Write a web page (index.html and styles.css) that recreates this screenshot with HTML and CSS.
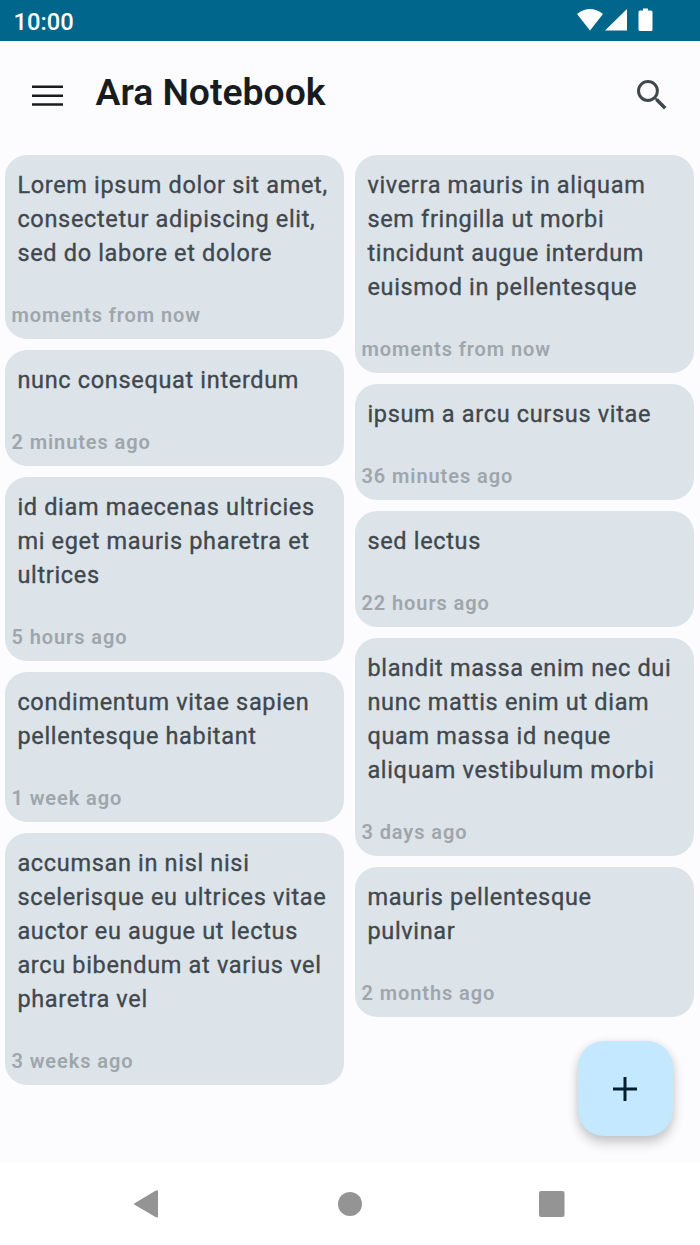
FILE: index.html
```html
<!DOCTYPE html>
<html lang="en">
<head>
<meta charset="utf-8">
<title>Ara Notebook</title>
<link rel="stylesheet" href="styles.css">
</head>
<body>
<header class="status"><span class="clock">10:00</span>
<svg class="status-icons" width="78" height="24" viewBox="0 0 78 24" fill="#fff"><path d="M0 6Q13-4 26 6L13 22.500Z"/><path d="M50 1V22.500H28Z"/><path d="M66 .5h5v2h3q1.500 0 1.500 1.500v17.500q0 1.500-1.500 1.500H63q-1.500 0-1.500-1.500V4q0-1.500 1.500-1.500h3Z"/></svg></header>
<div class="appbar">
<svg class="menu" width="31" height="22" viewBox="0 0 31 22" fill="#191c1e"><path d="M0 .5h31v2.500H0zM0 9.500h31v2.500H0zM0 18.300h31v2.500H0z"/></svg>
<h1 class="title">Ara Notebook</h1>
<svg class="search" width="29.500" height="29.500" viewBox="3 3 17.500 17.500" fill="#41484d"><path d="M15.500 14h-.79l-.28-.27A6.470 6.470 0 0 0 16 9.500 6.500 6.500 0 1 0 9.500 16c1.610 0 3.090-.59 4.230-1.570l.27.28v.79l5 4.990L20.490 19zm-6 .2a4.700 4.700 0 1 1 0-9.400 4.700 4.700 0 0 1 0 9.400z"/></svg>
</div>
<main class="notes">
<section class="column">
<article class="note"><p class="text">Lorem ipsum dolor sit amet,<br>consectetur adipiscing elit,<br>sed do labore et dolore</p><time class="time">moments from now</time></article>
<article class="note"><p class="text">nunc consequat interdum</p><time class="time">2 minutes ago</time></article>
<article class="note"><p class="text">id diam maecenas ultricies<br>mi eget mauris pharetra et<br>ultrices</p><time class="time">5 hours ago</time></article>
<article class="note"><p class="text">condimentum vitae sapien<br>pellentesque habitant</p><time class="time">1 week ago</time></article>
<article class="note"><p class="text">accumsan in nisl nisi<br>scelerisque eu ultrices vitae<br>auctor eu augue ut lectus<br>arcu bibendum at varius vel<br>pharetra vel</p><time class="time">3 weeks ago</time></article>
</section>
<section class="column">
<article class="note"><p class="text">viverra mauris in aliquam<br>sem fringilla ut morbi<br>tincidunt augue interdum<br>euismod in pellentesque</p><time class="time">moments from now</time></article>
<article class="note"><p class="text">ipsum a arcu cursus vitae</p><time class="time">36 minutes ago</time></article>
<article class="note"><p class="text">sed lectus</p><time class="time">22 hours ago</time></article>
<article class="note"><p class="text">blandit massa enim nec dui<br>nunc mattis enim ut diam<br>quam massa id neque<br>aliquam vestibulum morbi</p><time class="time">3 days ago</time></article>
<article class="note"><p class="text">mauris pellentesque<br>pulvinar</p><time class="time">2 months ago</time></article>
</section>
</main>
<button class="fab" aria-label="Add note"><svg width="24" height="24" viewBox="0 0 24 24" fill="#001e2c"><path d="M10.500 0h3v10.500H24v3H13.500V24h-3V13.500H0v-3h10.500z"/></svg></button>
<nav class="navbar">
<svg width="26" height="30" viewBox="0 0 26 30" fill="#949494"><path d="M22.500 1.700Q25 .5 25 2V27.500Q25 29 22.500 28L2 16Q0 15 2 14Z"/></svg>
<svg class="home" width="26" height="26" viewBox="0 0 26 26" fill="#949494"><circle cx="13" cy="13" r="12"/></svg>
<svg width="26" height="26" viewBox="0 0 26 26" fill="#949494"><rect width="25.500" height="26" rx="2"/></svg>
</nav>
</body>
</html>
```
FILE: styles.css
```css
* { box-sizing: border-box; }
body { margin: 0; width: 700px; height: 1245px; display: flex; flex-direction: column; overflow: hidden; background: #fcfcff; font-family: Roboto, sans-serif; position: relative; }
.status { height: 40.5px; background: #00668b; color: #fff; display: flex; justify-content: space-between; align-items: center; padding: 0 45.5px 0 13.5px; }
.clock { font-size: 23.7px; font-weight: 500; padding-top: 3px; }
.appbar { height: 114.5px; display: flex; align-items: flex-start; padding: 0 33.5px 0 32px; }
.menu { margin-top: 44px; }
.title { margin: 29px 0 0 32.5px; font-size: 37.3px; line-height: 44px; font-weight: 600; color: #191c1e; white-space: nowrap; }
.search { margin: 39.5px 0 0 auto; }
.notes { display: grid; grid-template-columns: 339px 339px; gap: 11px; padding: 0 5px 0 5.4px; flex: 1; }
.column { display: flex; flex-direction: column; gap: 11px; }
.note { background: #dce3e9; border-radius: 22px; padding: 12px 6px 9px; }
.text { margin: 0 0 29px; padding: 1px 6px 0; font-size: 23.5px; line-height: 34px; letter-spacing: .67px; font-weight: 400; color: #41484d; -webkit-text-stroke: .35px #41484d; white-space: nowrap; }
.time { display: block; height: 31px; font-size: 20px; line-height: 33px; letter-spacing: .92px; font-weight: 600; color: #9fa6ab; white-space: nowrap; }
.fab { position: absolute; left: 577.5px; top: 1041px; width: 95.5px; height: 95px; border: 0; border-radius: 26px; background: #c3e8ff; display: flex; align-items: center; justify-content: center; padding: 0 1px 0 0; box-shadow: 0 7px 12px #0003, 0 0 8px #0001; }
.navbar { height: 82px; background: #fff; display: flex; justify-content: space-between; align-items: center; padding: 0 135px 0 133px; }
.home { margin-left: 2px; }
```
